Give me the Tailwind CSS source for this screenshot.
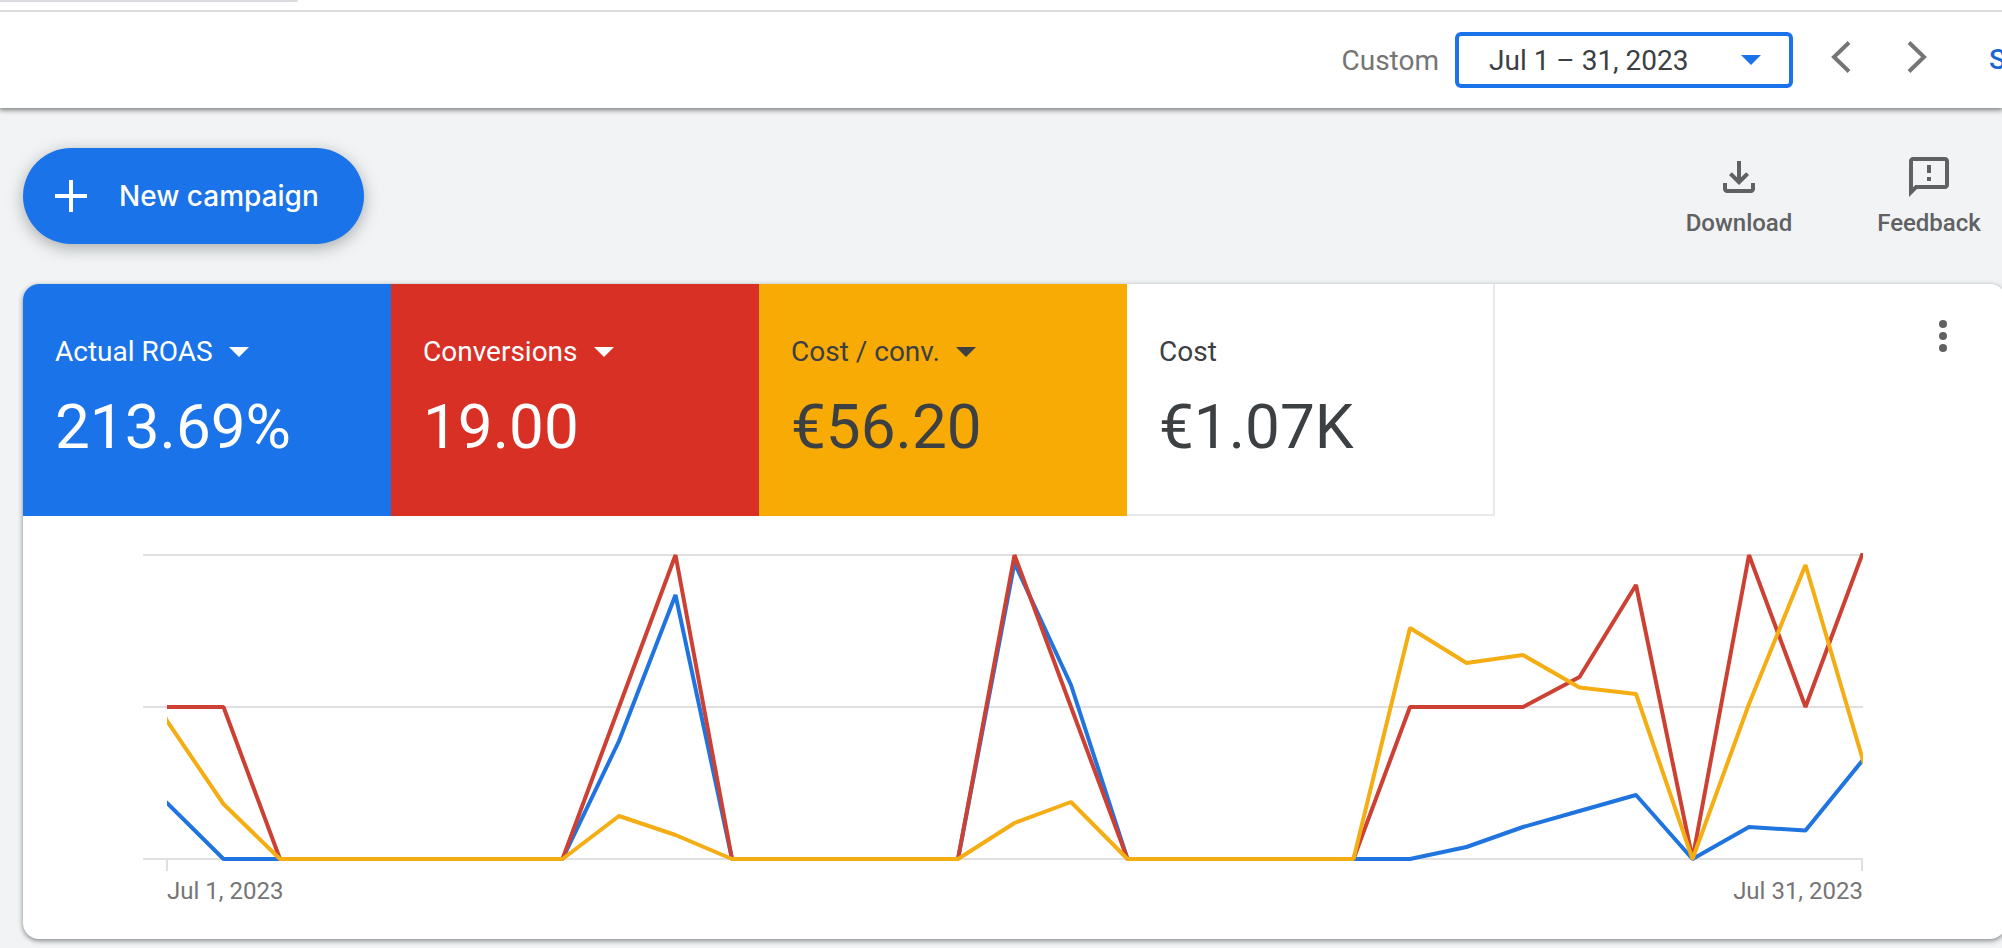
<!DOCTYPE html>
<html lang="en">
<head>
<meta charset="utf-8">
<meta name="viewport" content="width=device-width, initial-scale=1">
<title>Campaigns overview</title>
<script src="https://cdn.jsdelivr.net/npm/@tailwindcss/browser@4"></script>
</head>
<body class="min-h-screen overflow-x-hidden bg-[#f1f3f4] font-['Roboto',sans-serif] text-[28px] leading-8 text-[#3c4043]">

<header class="relative bg-white shadow-[0_1px_5px_1px_rgba(0,0,0,0.5)]">
  <div class="h-3 border-b-2 border-[#dadce0]">
    <div class="h-[2px] w-[298px] rounded-br-full bg-[#dadce0]"></div>
  </div>
  <div class="flex h-24 items-center justify-end">
    <span id="range-label" class="mr-4 pt-[2px] text-[#757575]">Custom</span>
    <button type="button" aria-labelledby="range-label range-value" aria-haspopup="dialog" class="mr-6 flex h-14 w-[338px] items-center justify-between rounded-md border-4 border-[#1a73e8] pr-7 pl-[30px]">
      <span id="range-value" class="pt-[2px]">Jul 1 – 31, 2023</span>
      <svg class="h-[10px] w-5 fill-[#1a73e8]" viewBox="0 0 20 10" aria-hidden="true"><path d="M0 0h20L10 10z"/></svg>
    </button>
    <button type="button" aria-label="Previous period" class="mr-7 flex size-12 items-center justify-center pb-[6px]">
      <svg class="h-8 w-5 fill-none stroke-[#757575]" viewBox="0 0 20 32" stroke-width="4" aria-hidden="true"><path d="M18 1.5 3 16l15 14.5"/></svg>
    </button>
    <button type="button" aria-label="Next period" class="mr-12 flex size-12 items-center justify-center pb-[6px]">
      <svg class="h-8 w-5 fill-none stroke-[#757575]" viewBox="0 0 20 32" stroke-width="4" aria-hidden="true"><path d="M2 1.5 17 16 2 30.5"/></svg>
    </button>
    <a href="#" class="w-[13px] font-medium text-[#1a66d6]">S</a>
  </div>
</header>

<main>
  <div class="flex items-center justify-between pt-10 pr-[17px] pl-[23px]">
    <button type="button" class="flex h-24 items-center rounded-full bg-[#1a73e8] pr-[45px] pl-8 font-['Inter',sans-serif] font-medium text-white shadow-[0_4px_16px_rgba(60,64,67,0.4)]">
      <svg class="mr-8 size-8 fill-white" viewBox="0 0 32 32" aria-hidden="true"><path d="M14 0h4v14h14v4H18v14h-4V18H0v-4h14z"/></svg>
      New campaign
    </button>
    <div class="flex gap-[78px] text-2xl leading-8 font-medium text-[#5f6163]">
      <button type="button" class="flex w-28 flex-col items-center gap-[6px]">
        <svg class="size-12 fill-current" viewBox="0 0 24 24" aria-hidden="true"><path d="M18 15v3H6v-3H4v3c0 1.1.9 2 2 2h12c1.1 0 2-.9 2-2v-3h-2zm-1-4-1.41-1.41L13 12.17V4h-2v8.17L8.41 9.59 7 11l5 5 5-5z"/></svg>
        Download
      </button>
      <button type="button" class="flex w-28 flex-col items-center gap-[6px]">
        <svg class="size-12 fill-current" viewBox="0 0 24 24" aria-hidden="true"><path d="M20 2H4c-1.1 0-1.99.9-1.99 2L2 22l4-4h14c1.1 0 2-.9 2-2V4c0-1.1-.9-2-2-2zm0 14H5.17l-.59.59-.58.58V4h16v12zm-9-4h2v2h-2zm0-6h2v4h-2z"/></svg>
        Feedback
      </button>
    </div>
  </div>

  <section aria-label="Performance" class="mt-10 -mr-1 ml-[23px] overflow-hidden rounded-2xl bg-white shadow-[0_2px_4px_rgba(60,64,67,0.45),0_1px_6px_rgba(60,64,67,0.2)]">
    <div class="flex items-start justify-between">
      <div class="grid w-[1472px] grid-cols-4">
        <div class="h-58 bg-[#1a73e8] px-8 pt-[52px] text-white">
          <button type="button" aria-haspopup="menu" class="flex items-center gap-4">Actual ROAS
            <svg class="h-[10px] w-5 fill-current" viewBox="0 0 20 10" aria-hidden="true"><path d="M0 0h20L10 10z"/></svg></button>
          <p class="mt-[23px] text-[62px] leading-[72px]">213.69%</p>
        </div>
        <div class="h-58 bg-[#d93025] px-8 pt-[52px] text-white">
          <button type="button" aria-haspopup="menu" class="flex items-center gap-4">Conversions
            <svg class="h-[10px] w-5 fill-current" viewBox="0 0 20 10" aria-hidden="true"><path d="M0 0h20L10 10z"/></svg></button>
          <p class="mt-[23px] text-[62px] leading-[72px]">19.00</p>
        </div>
        <div class="h-58 bg-[#f9ab05] px-8 pt-[52px]">
          <button type="button" aria-haspopup="menu" class="flex items-center gap-4">Cost / conv.
            <svg class="h-[10px] w-5 fill-current" viewBox="0 0 20 10" aria-hidden="true"><path d="M0 0h20L10 10z"/></svg></button>
          <p class="mt-[23px] text-[62px] leading-[72px]">€56.20</p>
        </div>
        <div class="h-58 border-r-2 border-b-2 border-[#e8eaea] px-8 pt-[52px]">
          <p>Cost</p>
          <p class="mt-[23px] text-[62px] leading-[72px]">€1.07K</p>
        </div>
      </div>
      <button type="button" aria-label="More options" class="mt-7 mr-[39px] flex size-12 items-center justify-center">
        <svg class="size-12 fill-[#5f6163]" viewBox="0 0 48 48" aria-hidden="true"><circle cx="24" cy="12" r="4"/><circle cx="24" cy="24" r="4"/><circle cx="24" cy="36" r="4"/></svg>
      </button>
    </div>

    <div class="pt-[35px] pr-[143px] pb-8 pl-[120px]">
      <!-- 31 daily points, 56.5 units apart, from x=24; baseline at y=308 -->
      <svg class="block w-full" viewBox="0 0 1720 320" role="img" aria-label="Daily performance, July 2023">
        <defs><clipPath id="plot"><rect x="24" y="2" width="1696" height="318"/></clipPath></defs>
        <path d="M0 4H1720M0 156H1720M0 308H1720M24 308V320M1719 308V320" fill="none" stroke="#e0e0e0" stroke-width="2"/>
        <g clip-path="url(#plot)" fill="none" stroke-width="4" stroke-linejoin="bevel">
          <polyline stroke="#2074e0" points="22,250 24,252 80.5,308 419.5,308 476,190 532.5,44 589,308 815,308 871.5,12 928,134 984.5,308 1267,308 1323.5,296 1380,276 1436.5,260 1493,244 1549.5,308 1606,276 1662.5,279.5 1719,210 1722,206"/>
          <polyline stroke="#cc4133" points="20,156 80.5,156 137,308 419.5,308 476,156 532.5,4 589,308 815,308 871.5,4 928,156 984.5,308 1210.5,308 1267,156 1380,156 1436.5,126 1493,34 1549.5,308 1606,4 1662.5,156 1719,4 1721,-1"/>
          <polyline stroke="#f4ad13" points="22,166 24,170 80.5,253 137,308 419.5,308 476,265 532.5,284 589,308 815,308 871.5,272 928,251 984.5,308 1210.5,308 1267,77 1323.5,112 1380,104 1436.5,136.5 1493,143 1549.5,308 1606,153 1662.5,14 1719,206 1721,213"/>
        </g>
      </svg>
      <div class="flex justify-between pt-1 pl-6 text-2xl leading-8 text-[#757575]"><span>Jul 1, 2023</span><span>Jul 31, 2023</span></div>
    </div>
  </section>
</main>
</body>
</html>
